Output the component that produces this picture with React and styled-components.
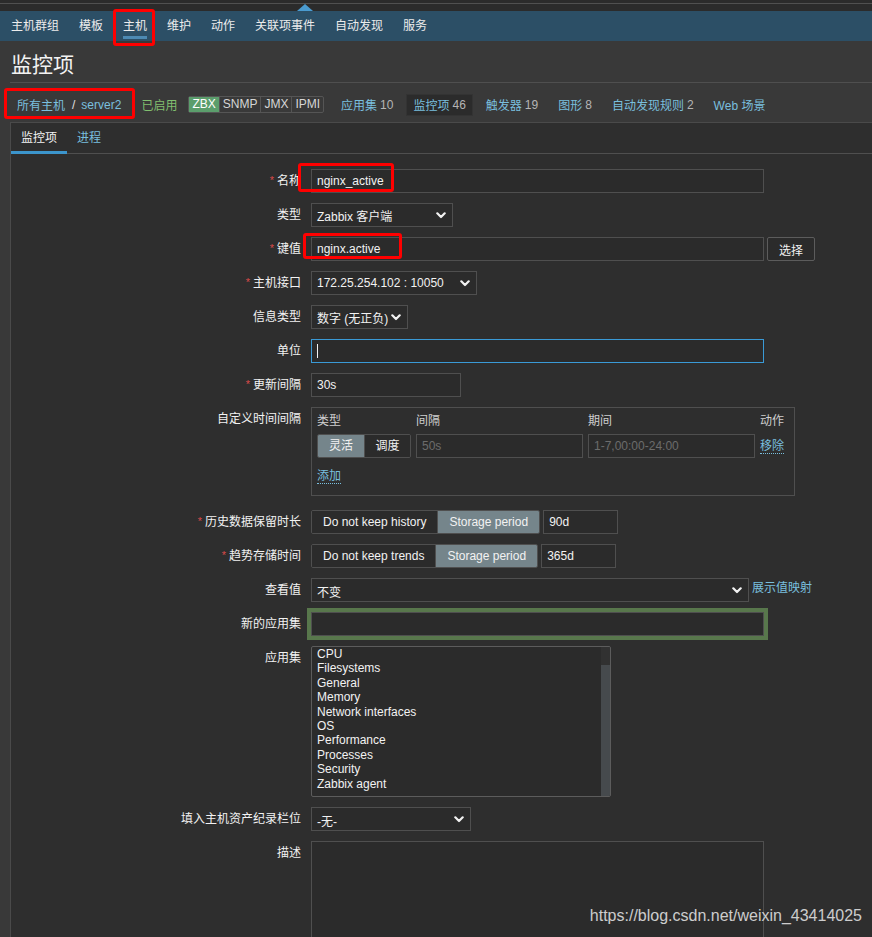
import React from "react";
import styled, { createGlobalStyle, css } from "styled-components";

const GlobalStyle = createGlobalStyle`
  html, body {
    margin: 0;
    padding: 0;
    background: #393939;
  }
  body {
    font-family: "Liberation Sans", Arial, "Noto Sans CJK SC", sans-serif;
    font-size: 12px;
    color: #f2f2f2;
  }
  * {
    box-sizing: border-box;
  }
`;

const navItems = ["主机群组", "模板", "主机", "维护", "动作", "关联项事件", "自动发现", "服务"];

const filterLinks = [
  { label: "应用集", count: 10 },
  { label: "监控项", count: 46, current: true },
  { label: "触发器", count: 19 },
  { label: "图形", count: 8 },
  { label: "自动发现规则", count: 2 },
  { label: "Web 场景" },
];

const applications = [
  "CPU",
  "Filesystems",
  "General",
  "Memory",
  "Network interfaces",
  "OS",
  "Performance",
  "Processes",
  "Security",
  "Zabbix agent",
];

const Chevron = () => (
  <svg width="10" height="7" viewBox="0 0 10 7">
    <path d="M1.3 1.3 L5 5 L8.7 1.3" fill="none" stroke="#f2f2f2" strokeWidth="2.2" strokeLinecap="round" strokeLinejoin="round" />
  </svg>
);

const App = () => {
  return (
    <Page>
      <GlobalStyle />
      <TopStrip>
        <Caret />
      </TopStrip>
      <NavBar>
        {navItems.map((item, i) => (
          <NavItem key={item} $active={i === 2}>
            {item}
            {i === 2 && <RedMark $x={0} $y={-2} $w={42} $h={37} />}
          </NavItem>
        ))}
      </NavBar>

      <TitleBar>
        <h1>监控项</h1>
      </TitleBar>

      <FilterRow>
        <Breadcrumb>
          <Link>所有主机</Link>
          <Sep>/</Sep>
          <Link>server2</Link>
          <RedMark $x={-6} $y={-6} $w={131} $h={31} />
        </Breadcrumb>
        <Status>已启用</Status>
        <Badges>
          <Badge $on>ZBX</Badge>
          <Badge>SNMP</Badge>
          <Badge>JMX</Badge>
          <Badge>IPMI</Badge>
        </Badges>
        {filterLinks.map((f) => (
          <FilterItem key={f.label} $current={f.current}>
            <Link>{f.label}</Link>
            {f.count !== undefined && <Count>{f.count}</Count>}
          </FilterItem>
        ))}
      </FilterRow>

      <Panel>
        <TabBar>
          <Tab $active>监控项</Tab>
          <Tab>进程</Tab>
        </TabBar>

        <Form>
          <Label $req>名称</Label>
          <Field>
            <Input $w={453} defaultValue="nginx_active" readOnly />
            <RedMark $x={-13} $y={-6} $w={96} $h={29} />
          </Field>

          <Label>类型</Label>
          <Field>
            <Select $w={142}>
              <span>Zabbix 客户端</span>
              <Chevron />
            </Select>
          </Field>

          <Label $req>键值</Label>
          <Field>
            <Input $w={453} defaultValue="nginx.active" readOnly />
            <Button>选择</Button>
            <RedMark $x={-8} $y={-4} $w={99} $h={26} />
          </Field>

          <Label $req>主机接口</Label>
          <Field>
            <Select $w={166}>
              <span>172.25.254.102 : 10050</span>
              <Chevron />
            </Select>
          </Field>

          <Label>信息类型</Label>
          <Field>
            <Select $w={97}>
              <span>数字 (无正负)</span>
              <Chevron />
            </Select>
          </Field>

          <Label>单位</Label>
          <Field>
            <Input $w={453} $focus readOnly />
            <TextCaret />
          </Field>

          <Label $req>更新间隔</Label>
          <Field>
            <Input $w={150} defaultValue="30s" readOnly />
          </Field>

          <Label>自定义时间间隔</Label>
          <Field $mb={4}>
            <IntervalBox>
              <IntervalGrid>
                <HeadCell>类型</HeadCell>
                <HeadCell>间隔</HeadCell>
                <HeadCell>期间</HeadCell>
                <HeadCell>动作</HeadCell>
                <Segmented>
                  <SegItem $on $fixed>灵活</SegItem>
                  <SegItem $fixed>调度</SegItem>
                </Segmented>
                <Input $w={167} placeholder="50s" readOnly />
                <Input $w={167} placeholder="1-7,00:00-24:00" readOnly />
                <ActionLink>移除</ActionLink>
              </IntervalGrid>
              <AddRow>
                <ActionLink>添加</ActionLink>
              </AddRow>
            </IntervalBox>
          </Field>

          <Label $req>历史数据保留时长</Label>
          <Field>
            <Segmented>
              <SegItem>Do not keep history</SegItem>
              <SegItem $on>Storage period</SegItem>
            </Segmented>
            <Input $w={75} defaultValue="90d" readOnly />
          </Field>

          <Label $req>趋势存储时间</Label>
          <Field>
            <Segmented>
              <SegItem>Do not keep trends</SegItem>
              <SegItem $on>Storage period</SegItem>
            </Segmented>
            <Input $w={75} defaultValue="365d" readOnly />
          </Field>

          <Label>查看值</Label>
          <Field>
            <Select $w={438}>
              <SelectText>不变</SelectText>
              <Chevron />
            </Select>
            <Link>展示值映射</Link>
          </Field>

          <Label>新的应用集</Label>
          <Field>
            <Input $w={453} $green readOnly />
          </Field>

          <Label>应用集</Label>
          <Field>
            <ListBox>
              <ListItems>
                {applications.map((a) => (
                  <div key={a}>{a}</div>
                ))}
              </ListItems>
              <ScrollTrack />
            </ListBox>
          </Field>

          <Label>填入主机资产纪录栏位</Label>
          <Field>
            <Select $w={160}>
              <SelectText>-无-</SelectText>
              <Chevron />
            </Select>
          </Field>

          <Label>描述</Label>
          <Field>
            <TextArea readOnly />
          </Field>
        </Form>
      </Panel>

      <Watermark>https://blog.csdn.net/weixin_43414025</Watermark>
    </Page>
  );
};

const Page = styled.div`
  position: relative;
  min-height: 937px;
  overflow: hidden;
`;

const TopStrip = styled.div`
  position: relative;
  height: 11px;
  background: #2b2b2b;
  &::before {
    content: "";
    position: absolute;
    left: 0;
    right: 0;
    top: 3px;
    height: 1px;
    background: #505050;
  }
`;

const Caret = styled.span`
  position: absolute;
  left: 297px;
  bottom: 0;
  width: 0;
  height: 0;
  border-left: 8px solid transparent;
  border-right: 8px solid transparent;
  border-bottom: 7px solid #4a9bd0;
`;

const NavBar = styled.nav`
  display: flex;
  height: 30px;
  padding-left: 1px;
  background: #2c4f66;
`;

const NavItem = styled.div`
  position: relative;
  padding: 0 10px;
  line-height: 30px;
  color: #ececec;
  ${(p) =>
    p.$active &&
    css`
      &::after {
        content: "";
        position: absolute;
        left: 10px;
        right: 10px;
        bottom: 2px;
        height: 3px;
        background: #4d8ab3;
      }
    `}
`;

const RedMark = styled.span`
  position: absolute;
  left: ${(p) => p.$x}px;
  top: ${(p) => p.$y}px;
  width: ${(p) => p.$w}px;
  height: ${(p) => p.$h}px;
  border: 3px solid #ff0000;
  border-radius: 3px;
  pointer-events: none;
  z-index: 3;
`;

const TitleBar = styled.div`
  display: flex;
  align-items: center;
  height: 42px;
  margin-left: 10px;
  padding: 3px 0 0 1px;
  border-bottom: 1px solid #4f4f4f;
  h1 {
    margin: 0;
    font-size: 21px;
    font-weight: normal;
    color: #f2f2f2;
  }
`;

const FilterRow = styled.div`
  display: flex;
  align-items: center;
  height: 39px;
  padding: 4px 0 0 10px;
`;

const Link = styled.span`
  color: #79bfde;
  white-space: nowrap;
`;

const Breadcrumb = styled.div`
  position: relative;
  display: flex;
  align-items: center;
  height: 22px;
  padding: 0 7px;
`;

const Sep = styled.span`
  margin: 0 6px 0 7px;
  color: #e0e0e0;
`;

const Status = styled.span`
  margin-left: 6px;
  padding: 0 7px;
  color: #82bf6f;
`;

const Badges = styled.div`
  display: inline-flex;
  margin: 0 10px 0 4px;
  border: 1px solid #555;
  border-radius: 2px;
`;

const Badge = styled.span`
  height: 15px;
  line-height: 15px;
  padding: 0 3px;
  color: ${(p) => (p.$on ? "#ffffff" : "#d6d6d6")};
  background: ${(p) => (p.$on ? "#5b9e6c" : "transparent")};
  & + & {
    border-left: 1px solid #555;
  }
`;

const FilterItem = styled.div`
  display: flex;
  align-items: center;
  height: 22px;
  padding: 0 7px;
  margin-right: 6px;
  white-space: nowrap;
  ${(p) =>
    p.$current &&
    css`
      background: #2b2b2b;
      border: 1px solid #333;
      padding: 0 6px;
    `}
`;

const Count = styled.span`
  margin-left: 3px;
  color: #b5b5b5;
`;

const Panel = styled.div`
  margin-left: 10px;
  background: #2e2e2e;
  border: 1px solid #4a4a4a;
  border-right: none;
  padding-bottom: 40px;
`;

const TabBar = styled.div`
  display: flex;
  height: 31px;
  border-bottom: 1px solid #4f4f4f;
`;

const Tab = styled.div`
  position: relative;
  height: 30px;
  line-height: 30px;
  padding: 0 10px;
  color: ${(p) => (p.$active ? "#f2f2f2" : "#79bfde")};
  ${(p) =>
    p.$active &&
    css`
      &::after {
        content: "";
        position: absolute;
        left: 0;
        right: 0;
        bottom: -1px;
        height: 3px;
        background: #3c95cc;
      }
    `}
`;

const Form = styled.div`
  display: grid;
  grid-template-columns: 290px 1fr;
  grid-auto-rows: minmax(24px, auto);
  column-gap: 10px;
  row-gap: 10px;
  padding-top: 15px;
`;

const Label = styled.div`
  height: 24px;
  text-align: right;
  line-height: 24px;
  white-space: nowrap;
  color: #f2f2f2;
  ${(p) =>
    p.$req &&
    css`
      &::before {
        content: "*";
        position: relative;
        top: -1px;
        margin-right: 3px;
        font-size: 11px;
        line-height: 0;
        color: #d94a4a;
      }
    `}
`;

const Field = styled.div`
  position: relative;
  display: flex;
  align-items: flex-start;
  gap: 3px;
  margin-bottom: ${(p) => p.$mb || 0}px;
`;

const Input = styled.input`
  width: ${(p) => p.$w}px;
  height: 24px;
  padding: 0 5px;
  background: #2b2b2b;
  border: 1px solid ${(p) => (p.$focus ? "#3a9ad6" : "#4f4f4f")};
  color: #f2f2f2;
  font: inherit;
  outline: ${(p) => (p.$green ? "4px solid #58774c" : "none")};
  &::placeholder {
    color: #6c6c6c;
  }
`;

const TextCaret = styled.span`
  position: absolute;
  left: 6px;
  top: 5px;
  width: 1px;
  height: 14px;
  background: #f2f2f2;
`;

const Select = styled.div`
  width: ${(p) => p.$w}px;
  height: 24px;
  display: flex;
  align-items: center;
  justify-content: space-between;
  padding: 0 6px 0 5px;
  background: #2b2b2b;
  border: 1px solid #4f4f4f;
  white-space: nowrap;
`;

const SelectText = styled.span`
  padding-top: 3px;
`;

const Button = styled.button`
  height: 24px;
  padding: 0 11px;
  background: #2b2b2b;
  border: 1px solid #5c5c5c;
  border-radius: 2px;
  color: #f2f2f2;
  font: inherit;
`;

const IntervalBox = styled.div`
  width: 484px;
  padding: 4px 5px 11px;
  border: 1px solid #4f4f4f;
`;

const IntervalGrid = styled.div`
  display: grid;
  grid-template-columns: 94px 167px 167px auto;
  column-gap: 5px;
  row-gap: 4px;
  align-items: center;
`;

const HeadCell = styled.div`
  line-height: 18px;
  color: #cfcfcf;
`;

const Segmented = styled.div`
  display: inline-flex;
  height: 24px;
  border: 1px solid #4f4f4f;
  border-radius: 2px;
  overflow: hidden;
`;

const SegItem = styled.span`
  height: 22px;
  line-height: 22px;
  padding: 0 11px;
  white-space: nowrap;
  color: #f2f2f2;
  background: ${(p) => (p.$on ? "#75858b" : "#2b2b2b")};
  ${(p) =>
    p.$fixed &&
    css`
      width: 46px;
      padding: 0;
      text-align: center;
    `}
  & + & {
    border-left: 1px solid #4f4f4f;
  }
`;

const ActionLink = styled.span`
  justify-self: start;
  color: #79bfde;
  line-height: 14px;
  border-bottom: 1px dotted #79bfde;
`;

const AddRow = styled.div`
  display: flex;
  margin-top: 11px;
`;

const ListBox = styled.div`
  display: flex;
  width: 300px;
  height: 151px;
  background: #2b2b2b;
  border: 1px solid #5c5c5c;
  border-radius: 2px;
  overflow: hidden;
`;

const ListItems = styled.div`
  flex: 1;
  padding: 0 5px;
  line-height: 14.4px;
  color: #f2f2f2;
`;

const ScrollTrack = styled.div`
  display: flex;
  flex-direction: column;
  width: 9px;
  background: #464a4d;
  &::before {
    content: "";
    height: 18px;
    background: #313131;
  }
`;

const TextArea = styled.textarea`
  width: 453px;
  height: 120px;
  background: #2b2b2b;
  border: 1px solid #4f4f4f;
  color: #f2f2f2;
  font: inherit;
  resize: none;
  outline: none;
`;

const Watermark = styled.div`
  position: absolute;
  right: 10px;
  top: 907px;
  font-size: 16px;
  color: rgba(235, 235, 235, 0.85);
  pointer-events: none;
`;

export default App;
